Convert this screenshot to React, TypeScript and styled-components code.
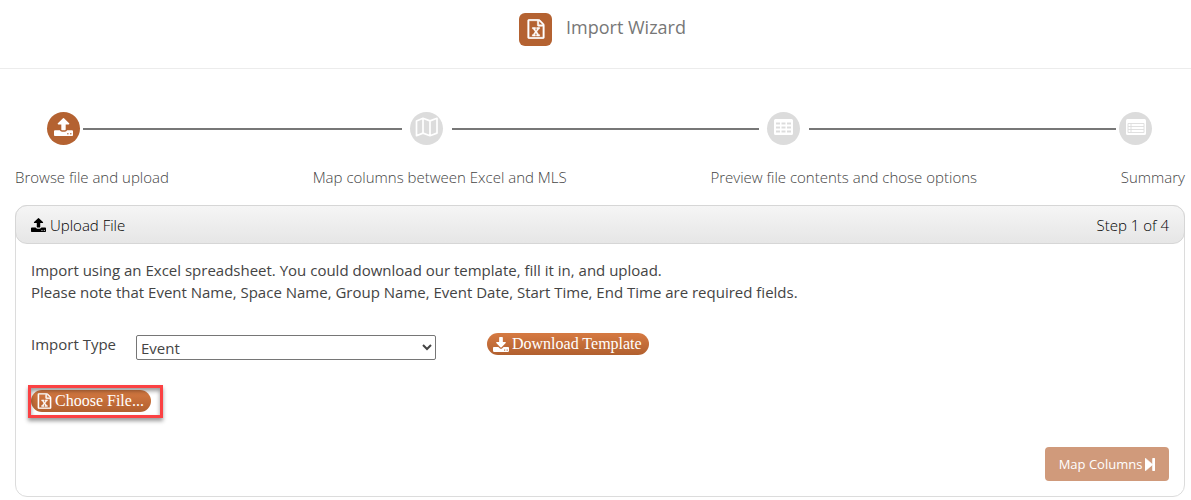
import React from "react";
import styled, { createGlobalStyle } from "styled-components";

const GlobalStyle = createGlobalStyle`
  * { box-sizing: border-box; }
  body {
    margin: 0;
    background: #fff;
    color: #444;
    font: 400 15px/22px "Open Sans", "Noto Sans", sans-serif;
  }
`;

const Header = styled.header`
  display: flex;
  justify-content: center;
  gap: 14px;
  height: 69px;
  padding: 13px 0 0 14px;
  border-bottom: 1px solid #ececec;
`;

const AppBadge = styled.span`
  display: grid;
  place-items: center;
  width: 33px;
  height: 33px;
  padding-bottom: 2px;
  border-radius: 6px;
  background: #b46231;
  color: #fff;
`;

const Title = styled.h1`
  margin: 0;
  color: #777;
  font-size: 18px;
  font-weight: 400;
  line-height: 28px;
`;

const Glyph = styled.svg<{ $w: number; $h: number }>`
  display: block;
  flex: none;
  width: ${(p) => p.$w}px;
  height: ${(p) => p.$h}px;
  fill: currentColor;
`;

const Main = styled.main`
  padding: 43px 6px 3px 15px;
`;

const Track = styled.div`
  display: flex;
  align-items: center;
  padding: 0 33px 0 32px;
`;

const StepDot = styled.span<{ $active?: boolean }>`
  display: grid;
  flex: none;
  place-items: center;
  width: 33px;
  height: 33px;
  padding-bottom: 4px;
  border-radius: 50%;
  background: ${(p) => (p.$active ? "#b46231" : "#dcdcdc")};
  color: #fff;
`;

const Connector = styled.span<{ $grow: number; $before: number; $after: number }>`
  flex: ${(p) => p.$grow} 1 0;
  height: 2px;
  margin: 0 ${(p) => p.$after}px 0 ${(p) => p.$before}px;
  background: #777;
`;

const StepLabels = styled.ol`
  display: flex;
  justify-content: space-between;
  margin: 21px 0 17px;
  padding: 0;
  list-style: none;
  color: #444;
  font-weight: 300;
`;

const Panel = styled.section`
  border: 1px solid #dcdcdc;
  border-radius: 12px;
`;

const PanelHeader = styled.div`
  display: flex;
  align-items: center;
  justify-content: space-between;
  height: 39px;
  margin: -1px;
  padding: 0 15px;
  border: 1px solid #d6d6d6;
  border-radius: 12px;
  background: linear-gradient(#f5f5f5, #e6e6e6);
  color: #000;
  font-weight: 300;
`;

const PanelTitle = styled.h2`
  display: flex;
  align-items: center;
  gap: 4px;
  margin: 0;
  font-size: 15px;
  font-weight: 300;
`;

const PanelBody = styled.div`
  padding: 16px 15px 15px;
`;

const Intro = styled.p`
  margin: 0;
`;

const FormRow = styled.div`
  display: flex;
  align-items: flex-start;
  margin-top: 30px;
`;

const FieldLabel = styled.label`
  width: 105px;
`;

const TypeSelect = styled.select`
  width: 300px;
  height: 25px;
  margin: 2px 51px 0 0;
  padding: 0;
  border: 1px solid #767676;
  border-radius: 2px;
  background: #fff;
  color: #444;
  font: inherit;
`;

const PillButton = styled.button`
  display: flex;
  align-items: center;
  gap: 3px;
  height: 22px;
  padding: 0 7px 0 6px;
  border: 0;
  border-radius: 11px;
  background: linear-gradient(#d67a42, #b1602f);
  color: #fff;
  font: 400 16px/24px "Liberation Serif", serif;
  white-space: nowrap;
`;

const FileRow = styled.div`
  position: relative;
  width: max-content;
  margin-top: 30px;
`;

const Callout = styled.span`
  position: absolute;
  inset: -5px -12px -6px -3px;
  border: 3px solid #fb4143;
  box-shadow: 0 3px 4px rgba(0, 0, 0, 0.4), inset 0 3px 4px rgba(0, 0, 0, 0.4);
  pointer-events: none;
`;

const Actions = styled.div`
  display: flex;
  justify-content: flex-end;
  margin-top: 35px;
`;

const NextButton = styled.button`
  display: flex;
  align-items: center;
  justify-content: center;
  gap: 3px;
  width: 124px;
  height: 34px;
  padding: 0;
  border: 0;
  border-radius: 4px;
  background: #d09a7b;
  color: #fff;
  font: 500 13px/20px "Open Sans", "Noto Sans", sans-serif;
  white-space: nowrap;
`;

type IconProps = { w: number; h: number };

const UploadIcon = ({ w, h }: IconProps) => (
  <Glyph $w={w} $h={h} viewBox="0 64 1664 1600" preserveAspectRatio="none" aria-hidden="true">
    <path d="M1280 1472q0-26-19-45t-45-19-45 19-19 45 19 45 45 19 45-19 19-45zm256 0q0-26-19-45t-45-19-45 19-19 45 19 45 45 19 45-19 19-45zm128-224v320q0 40-28 68t-68 28h-1472q-40 0-68-28t-28-68v-320q0-40 28-68t68-28h427q21 56 70.5 92t110.5 36h256q61 0 110.5-36t70.5-92h427q40 0 68 28t28 68zm-325-648q-17 40-59 40h-256v448q0 26-19 45t-45 19h-256q-26 0-45-19t-19-45v-448h-256q-42 0-59-40-17-39 14-69l448-448q18-19 45-19t45 19l448 448q31 30 14 69z" />
  </Glyph>
);

const DownloadIcon = ({ w, h }: IconProps) => (
  <Glyph $w={w} $h={h} viewBox="0 0 1664 1536" aria-hidden="true">
    <path d="M1280 1344q0-26-19-45t-45-19-45 19-19 45 19 45 45 19 45-19 19-45zm256 0q0-26-19-45t-45-19-45 19-19 45 19 45 45 19 45-19 19-45zm128-224v320q0 40-28 68t-68 28h-1472q-40 0-68-28t-28-68v-320q0-40 28-68t68-28h465l135 136q58 56 136 56t136-56l136-136h464q40 0 68 28t28 68zm-325-569q17 41-14 70l-448 448q-18 19-45 19t-45-19l-448-448q-31-29-14-70 17-39 59-39h256v-448q0-26 19-45t45-19h256q26 0 45 19t19 45v448h256q42 0 59 39z" />
  </Glyph>
);

const ExcelIcon = ({ w, h }: IconProps) => (
  <Glyph $w={w} $h={h} viewBox="-30 -30 1596 1852" aria-hidden="true">
    <path
      stroke="currentColor"
      strokeWidth="50"
      d="M1468 380q28 28 48 76t20 88v1152q0 40-28 68t-68 28h-1344q-40 0-68-28t-28-68v-1600q0-40 28-68t68-28h896q40 0 88 20t76 48zm-444-244v376h376q-10-29-22-41l-313-313q-12-12-41-22zm384 1528v-1024h-416q-40 0-68-28t-28-68v-416h-768v1536h1280zm-979-234v106h281v-106h-75l103-161q5-7 10-16.5t7.5-13.5 3.5-4h2q1 4 5 10 2 4 4.5 7.5t6 8 6.5 8.5l107 161h-76v106h291v-106h-68l-192-273 195-282h67v-107h-279v107h74l-103 159q-4 7-10 16.5t-9 13.5l-2 3h-2q-1-4-5-10-6-11-17-23l-106-159h76v-107h-290v107h68l189 272-194 283h-68z"
    />
  </Glyph>
);

const MapIcon = () => (
  <Glyph $w={24} $h={20} viewBox="0 0 24 20" aria-hidden="true">
    <path
      d="M1.5 4L8 1.3l7 2.6 7-2.6v14.8l-7 2.6-7-2.6-6.5 2.6zM8 1.3v14.8M15 3.9v14.8"
      fill="none"
      stroke="currentColor"
      strokeWidth="1.7"
      strokeLinejoin="round"
    />
  </Glyph>
);

const TableIcon = () => (
  <Glyph $w={19} $h={16} viewBox="0 0 19 16" aria-hidden="true">
    <path
      fillRule="evenodd"
      d="M1.5 0h16Q19 0 19 1.5v13q0 1.5-1.5 1.5h-16Q0 16 0 14.500v-13Q0 0 1.5 0zM2 3.500v2h4v-2zM7.500 3.500v2h4v-2zM13 3.500v2h4v-2zM2 7.500v2h4v-2zM7.500 7.500v2h4v-2zM13 7.500v2h4v-2zM2 11.500v2h4v-2zM7.500 11.500v2h4v-2zM13 11.500v2h4v-2z"
    />
  </Glyph>
);

const ListIcon = () => (
  <Glyph $w={20} $h={16} viewBox="0 0 20 16" aria-hidden="true">
    <rect width="20" height="16" rx="1.5" />
    <path d="M2 4.500h16v9H2zM2 7.500h16M2 10.500h16M5 4.500v9" fill="none" stroke="#dcdcdc" strokeWidth="0.9" />
  </Glyph>
);

const StepForwardIcon = () => (
  <Glyph $w={10} $h={13} viewBox="0 120 1024 1550" preserveAspectRatio="none" aria-hidden="true">
    <path
      stroke="currentColor"
      strokeWidth="60"
      d="M45 1651q-19 19-32 13t-13-32v-1472q0-26 13-32t32 13l710 710q9 9 13 19v-678q0-26 19-45t45-19h128q26 0 45 19t19 45v1408q0 26-19 45t-45 19h-128q-26 0-45-19t-19-45v-678q-4 11-13 19z"
    />
  </Glyph>
);

const steps = [
  "Browse file and upload",
  "Map columns between Excel and MLS",
  "Preview file contents and chose options",
  "Summary",
];

export default function App() {
  return (
    <>
      <GlobalStyle />
      <Header>
        <AppBadge>
          <ExcelIcon w={18} h={20} />
        </AppBadge>
        <Title>Import Wizard</Title>
      </Header>
      <Main>
        <Track>
          <StepDot $active>
            <UploadIcon w={19} h={18} />
          </StepDot>
          <Connector $grow={319} $before={3} $after={8} />
          <StepDot>
            <MapIcon />
          </StepDot>
          <Connector $grow={307} $before={9} $after={8} />
          <StepDot>
            <TableIcon />
          </StepDot>
          <Connector $grow={307} $before={9} $after={3} />
          <StepDot>
            <ListIcon />
          </StepDot>
        </Track>
        <StepLabels>
          {steps.map((label) => (
            <li key={label}>{label}</li>
          ))}
        </StepLabels>
        <Panel>
          <PanelHeader>
            <PanelTitle>
              <UploadIcon w={15} h={14} />
              Upload File
            </PanelTitle>
            <span>Step 1 of 4</span>
          </PanelHeader>
          <PanelBody>
            <Intro>
              Import using an Excel spreadsheet. You could download our template, fill it in, and upload.
              <br />
              Please note that Event Name, Space Name, Group Name, Event Date, Start Time, End Time are required
              fields.
            </Intro>
            <FormRow>
              <FieldLabel htmlFor="import-type">Import Type</FieldLabel>
              <TypeSelect id="import-type" defaultValue="Event">
                <option>Event</option>
              </TypeSelect>
              <PillButton type="button">
                <DownloadIcon w={16} h={15} />
                Download Template
              </PillButton>
            </FormRow>
            <FileRow>
              <PillButton type="button">
                <ExcelIcon w={15} h={16} />
                Choose File...
              </PillButton>
              <Callout />
            </FileRow>
            <Actions>
              <NextButton type="button">
                Map Columns
                <StepForwardIcon />
              </NextButton>
            </Actions>
          </PanelBody>
        </Panel>
      </Main>
    </>
  );
}
